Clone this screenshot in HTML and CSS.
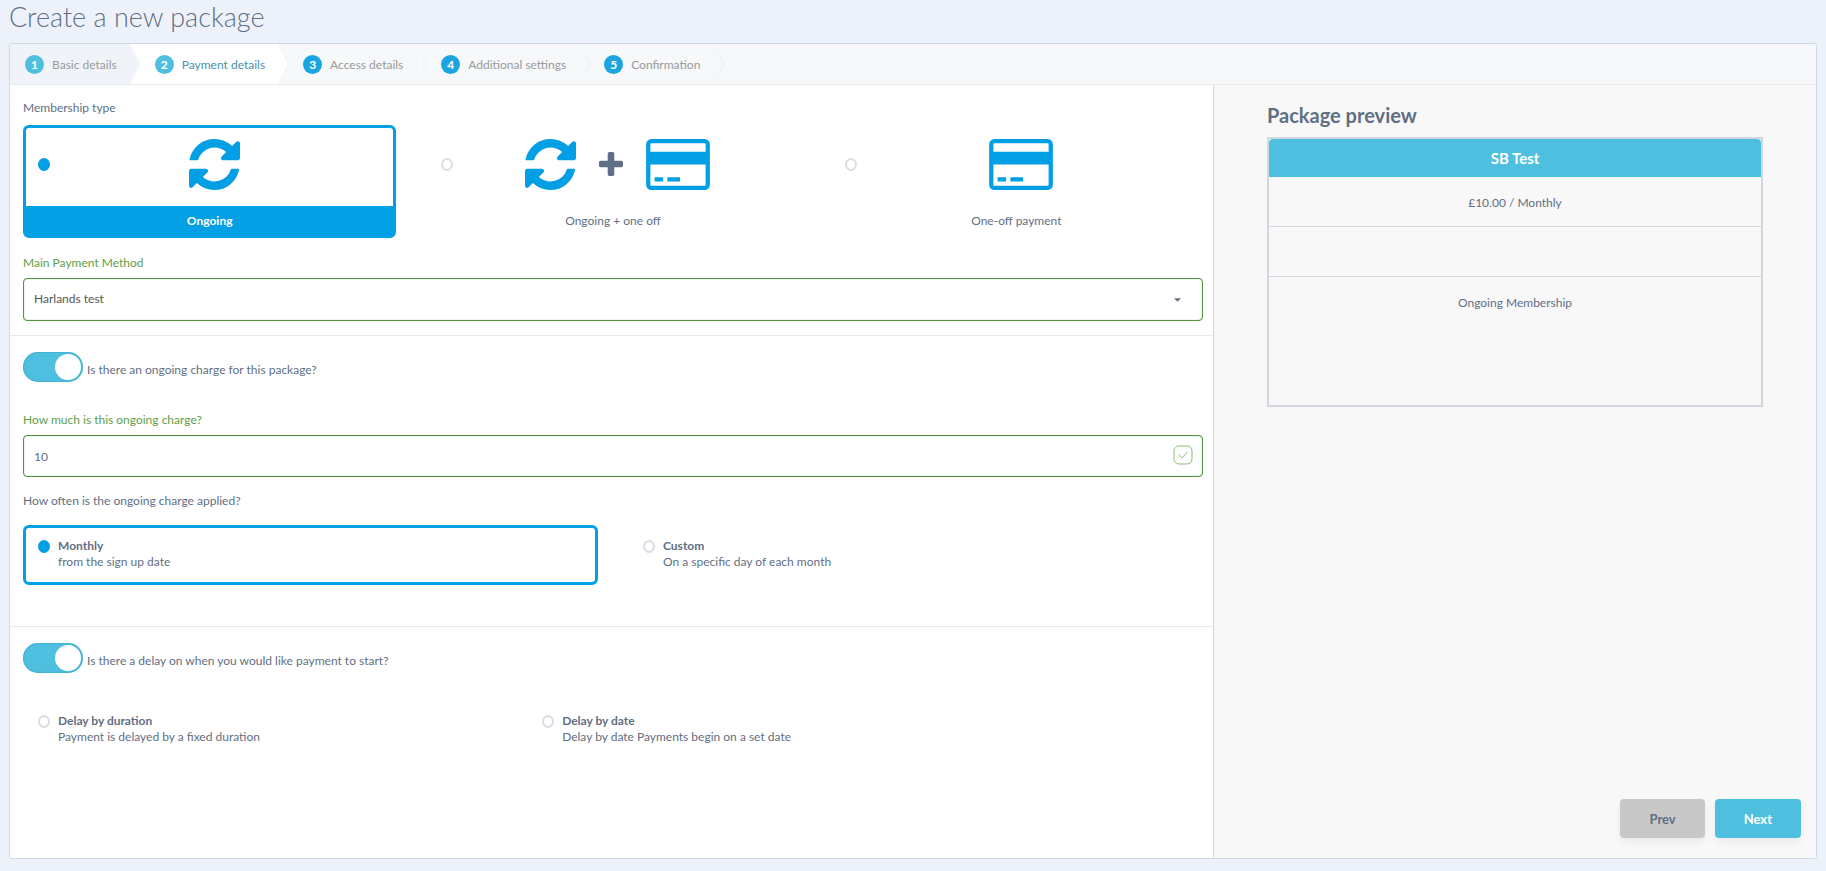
FILE: index.html
```html
<!DOCTYPE html>
<html lang="en">
<head>
<meta charset="utf-8">
<title>Create a new package</title>
<meta name="viewport" content="width=device-width, initial-scale=1">
<link rel="stylesheet" href="styles.css">
</head>
<body>
<svg class="sprite" aria-hidden="true">
  <symbol id="icon-sync" viewBox="0 0 1536 1536"><path d="M1511 928q0 5-1 7-64 268-268 434.5t-478 166.5q-146 0-282.5-55t-243.5-157l-129 129q-19 19-45 19t-45-19-19-45v-448q0-26 19-45t45-19h448q26 0 45 19t19 45-19 45l-137 137q71 66 161 102t187 36q134 0 250-65t186-179q11-17 53-117 8-23 30-23h192q13 0 22.5 9.5t9.5 22.5zm25-800v448q0 26-19 45t-45 19h-448q-26 0-45-19t-19-45 19-45l138-138q-148-137-349-137-134 0-250 65t-186 179q-11 17-53 117-8 23-30 23h-199q-13 0-22.5-9.5t-9.5-22.5v-7q65-268 270-434.5t480-166.5q146 0 284 55.5t245 156.5l130-129q19-19 45-19t45 19 19 45z"/></symbol>
  <symbol id="icon-card" viewBox="0 0 1920 1536"><path d="M1760 0q66 0 113 47t47 113v1216q0 66-47 113t-113 47h-1600q-66 0-113-47t-47-113v-1216q0-66 47-113t113-47h1600zM160 128q-13 0-22.5 9.5t-9.5 22.5v224h1664v-224q0-13-9.5-22.5t-22.5-9.5h-1600zM1760 1408q13 0 22.5-9.5t9.5-22.5v-608h-1664v608q0 13 9.5 22.5t22.5 9.5h1600zM256 1280v-128h256v128h-256zM640 1280v-128h384v128h-384z"/></symbol>
  <symbol id="icon-plus" viewBox="0 0 1408 1408"><path d="M1408 608v192q0 40-28 68t-68 28h-416v416q0 40-28 68t-68 28h-192q-40 0-68-28t-28-68v-416h-416q-40 0-68-28t-28-68v-192q0-40 28-68t68-28h416v-416q0-40 28-68t68-28h192q40 0 68 28t28 68v416h416q40 0 68 28t28 68z"/></symbol>
</svg>

<h1 class="page-title">Create a new package</h1>

<form class="wizard">
  <nav aria-label="Steps">
    <ol class="steps">
      <li class="step done"><a href="#basic"><span class="badge">1</span>Basic details</a></li>
      <li class="step active"><a href="#payment" aria-current="step"><span class="badge">2</span>Payment details</a></li>
      <li class="step"><a href="#access"><span class="badge">3</span>Access details</a></li>
      <li class="step"><a href="#settings"><span class="badge">4</span>Additional settings</a></li>
      <li class="step"><a href="#confirm"><span class="badge">5</span>Confirmation</a></li>
    </ol>
  </nav>

  <div class="body">
    <main class="details">
      <section class="section">
        <h2 class="label" id="type-label">Membership type</h2>
        <div class="types" role="radiogroup" aria-labelledby="type-label">
          <label class="type">
            <span class="type-top">
              <input class="radio" type="radio" name="type" checked>
              <span class="icons"><svg class="sync"><use href="#icon-sync"/></svg></span>
            </span>
            <span class="type-name">Ongoing</span>
          </label>
          <label class="type">
            <span class="type-top">
              <input class="radio" type="radio" name="type">
              <span class="icons"><svg class="sync"><use href="#icon-sync"/></svg><svg class="plus"><use href="#icon-plus"/></svg><svg class="card"><use href="#icon-card"/></svg></span>
            </span>
            <span class="type-name">Ongoing + one off</span>
          </label>
          <label class="type">
            <span class="type-top">
              <input class="radio" type="radio" name="type">
              <span class="icons"><svg class="card"><use href="#icon-card"/></svg></span>
            </span>
            <span class="type-name">One-off payment</span>
          </label>
        </div>
        <label class="label valid" for="method">Main Payment Method</label>
        <div class="control">
          <select class="field" id="method"><option>Harlands test</option></select>
          <svg class="caret" viewBox="0 0 8 4"><path d="M0 0h8L4 4z"/></svg>
        </div>
      </section>

      <section class="section">
        <label class="toggle"><input class="switch" type="checkbox" role="switch" checked><span class="toggle-text">Is there an ongoing charge for this package?</span></label>
        <label class="label valid" for="charge">How much is this ongoing charge?</label>
        <div class="control">
          <input class="field" id="charge" type="text" value="10">
          <svg class="tick" viewBox="0 0 20 20"><rect x="1" y="1" width="18" height="18" rx="5"/><path d="M5.500 9.500l3.500 3.500 5.500-6"/></svg>
        </div>
        <h2 class="label" id="often-label">How often is the ongoing charge applied?</h2>
        <div class="options halves" role="radiogroup" aria-labelledby="often-label">
          <label class="option">
            <input class="radio" type="radio" name="often" checked>
            <span class="option-text"><b>Monthly</b><span>from the sign up date</span></span>
          </label>
          <label class="option">
            <input class="radio" type="radio" name="often">
            <span class="option-text"><b>Custom</b><span>On a specific day of each month</span></span>
          </label>
        </div>
      </section>

      <section class="section">
        <label class="toggle"><input class="switch" type="checkbox" role="switch" checked><span class="toggle-text">Is there a delay on when you would like payment to start?</span></label>
        <div class="options twelfths" role="radiogroup" aria-label="Payment delay">
          <label class="option">
            <input class="radio" type="radio" name="delay">
            <span class="option-text"><b>Delay by duration</b><span>Payment is delayed by a fixed duration</span></span>
          </label>
          <label class="option">
            <input class="radio" type="radio" name="delay">
            <span class="option-text"><b>Delay by date</b><span>Delay by date Payments begin on a set date</span></span>
          </label>
        </div>
      </section>
    </main>

    <aside class="side">
      <div class="summary">
        <h2 class="summary-title">Package preview</h2>
        <div class="preview">
          <h3 class="preview-name">SB Test</h3>
          <p class="preview-row">£10.00 / Monthly</p>
          <p class="preview-row"></p>
          <p class="preview-row last">Ongoing Membership</p>
        </div>
      </div>
      <div class="actions">
        <button class="btn prev" type="button">Prev</button>
        <button class="btn next" type="button">Next</button>
      </div>
    </aside>
  </div>
</form>
</body>
</html>
```
FILE: styles.css
```css
:root {
  --ink: #5f6f84;
  --blue: #029fe5;
  --sky: #4fbfdf;
  --green: #5f9e48;
  --line: #d2d6de;
}

* {
  box-sizing: border-box;
}

body {
  margin: 0;
  padding: 0 9px 12px;
  min-height: 100vh;
  display: flex;
  flex-direction: column;
  background: #edf2fa;
  color: var(--ink);
  font: 12px/17px Lato, "Liberation Sans", sans-serif;
}

h1, h2, h3, p, ol {
  margin: 0;
  padding: 0;
  font-weight: 400;
}

.sprite {
  position: absolute;
  width: 0;
  height: 0;
}

.page-title {
  height: 43px;
  font-size: 27px;
  font-weight: 300;
  line-height: 34px;
}

.wizard {
  flex: 1;
  display: flex;
  flex-direction: column;
  border: 1px solid #ccd9e6;
  border-radius: 3px;
  background: #fff;
  overflow: hidden;
}

/* Step bar */
.steps {
  display: flex;
  height: 41px;
  list-style: none;
  background: #f6f8fa;
  border-bottom: 1px solid #e6ebf0;
}

.step {
  position: relative;
  display: flex;
  align-items: center;
  padding: 0 13px 0 25px;
  background: #f6f8fa;
}

.step:first-child {
  padding-left: 15px;
}

.step::before,
.step::after {
  content: "";
  position: absolute;
  z-index: 1;
  top: 0;
  left: 100%;
  width: 11px;
  height: 100%;
  background: #eaedf1;
  clip-path: polygon(0 0, 100% 50%, 0 100%);
}

.step::after {
  width: 10px;
  background: #f6f8fa;
}

.step.done,
.step.done::before,
.step.done::after {
  background: #f0f4f9;
}

.step.active,
.step.active::after {
  background: #fff;
}

.step a {
  display: flex;
  align-items: center;
  gap: 8px;
  color: #999;
  text-decoration: none;
}

.step.active a {
  color: #4a8fb0;
}

.badge {
  width: 19px;
  height: 19px;
  border-radius: 50%;
  background: #1ba5e0;
  color: #fff;
  font-weight: 700;
  line-height: 19px;
  text-align: center;
}

.done .badge,
.active .badge {
  background: var(--sky);
}

.step .badge {
  flex: none;
}

/* Columns */
.body {
  flex: 1;
  display: grid;
  grid-template-columns: 2fr 1fr;
}

.details {
  border-right: 1px solid #d6dbe5;
}

.section {
  padding: 16px 10px 0 13px;
}

.section + .section {
  border-top: 1px solid #e6eaef;
}

.section:first-child {
  padding-top: 14px;
  padding-bottom: 14px;
}

.label {
  display: block;
  font-size: 12px;
  line-height: 17px;
}

.valid {
  color: var(--green);
}

/* Membership type cards */
.types {
  display: grid;
  grid-template-columns: repeat(3, 1fr);
  gap: 30px;
  margin: 9px 0 16px;
}

.type {
  display: flex;
  flex-direction: column;
  border: 3px solid transparent;
  border-radius: 6px;
}

.type:has(:checked),
.option:has(:checked) {
  border-color: var(--blue);
}

.type-top {
  display: flex;
  align-items: center;
  height: 78px;
  padding: 0 15px 6px 12px;
}

.icons {
  flex: 1;
  display: flex;
  align-items: center;
  justify-content: center;
  gap: 23px;
  fill: var(--blue);
}

.sync {
  width: 51px;
  height: 51px;
}

.card {
  width: 64px;
  height: 51px;
}

.plus {
  width: 24px;
  height: 24px;
  fill: var(--ink);
}

.type-name {
  padding: 6px 0;
  text-align: center;
}

.type:has(:checked) .type-name {
  background: var(--blue);
  color: #fff;
  font-weight: 700;
}

.radio {
  appearance: none;
  flex: none;
  width: 12px;
  height: 13px;
  margin: 0;
  border: 2px solid #dadde5;
  border-radius: 50%;
  background: #fff;
}

.radio:checked {
  border-color: var(--blue);
  background: var(--blue);
}

/* Fields */
.control {
  display: grid;
  align-items: center;
  margin: 7px 0 15px;
}

.control > * {
  grid-area: 1 / 1;
}

.field {
  appearance: none;
  width: 100%;
  height: 42px;
  margin: 0;
  padding: 0 10px;
  border: 1px solid #55923f;
  border-radius: 4px;
  background: #fff;
  box-shadow: inset 0 0 1px var(--green);
  color: var(--ink);
  font: inherit;
}

select.field {
  height: 43px;
  padding-bottom: 2px;
  color: #555;
}

.section:first-child .control {
  margin-bottom: 0;
}

.caret {
  justify-self: end;
  width: 7px;
  height: 4px;
  margin-right: 22px;
  fill: var(--ink);
  pointer-events: none;
}

.tick {
  justify-self: end;
  width: 20px;
  height: 20px;
  margin: 0 10px 2px 0;
  fill: none;
  stroke: #8dbb7a;
}

/* Switches */
.toggle {
  display: flex;
  align-items: center;
  gap: 4px;
}

.toggle-text {
  padding-top: 4px;
}

.switch {
  appearance: none;
  width: 60px;
  height: 30px;
  margin: 0;
  padding: 2px;
  border-radius: 15px;
  background: var(--sky);
  box-shadow: inset 0 0 2px #2f8fae;
}

.switch::before {
  content: "";
  display: block;
  width: 26px;
  height: 26px;
  border-radius: 50%;
  background: #fff;
}

.switch:checked::before {
  margin-left: auto;
}

.toggle + .label {
  margin-top: 29px;
}

/* Radio options */
.options {
  display: grid;
  gap: 30px;
}

.halves {
  grid-template-columns: 1fr 1fr;
  margin: 16px 0 41px;
}

.twelfths {
  grid-template-columns: repeat(12, 1fr);
  margin: 27px 0;
}

.twelfths .option {
  grid-column: span 5;
}

.option {
  display: flex;
  align-items: flex-start;
  gap: 8px;
  height: 60px;
  padding: 10px 12px;
  border: 3px solid transparent;
  border-radius: 6px;
}

.option .radio {
  margin-top: 2px;
}

.option-text {
  display: flex;
  flex-direction: column;
  line-height: 16px;
}

/* Preview */
.side {
  display: flex;
  flex-direction: column;
  justify-content: space-between;
  background: #f8f8f8;
}

.summary {
  padding: 18px 53px 0;
}

.summary-title {
  font-size: 20px;
  font-weight: 700;
  line-height: 24px;
}

.preview {
  margin-top: 10px;
  border: 2px solid var(--line);
}

.preview-name {
  border-radius: 4px 4px 0 0;
  background: var(--sky);
  color: #fff;
  font-size: 15px;
  font-weight: 700;
  line-height: 38px;
  text-align: center;
}

.preview-row {
  height: 50px;
  padding-top: 17px;
  border-bottom: 1px solid var(--line);
  text-align: center;
}

.preview-row.last {
  height: 128px;
  border: 0;
}

.actions {
  display: flex;
  justify-content: flex-end;
  gap: 10px;
  padding: 0 15px 20px;
}

.btn {
  height: 39px;
  padding: 0 29px;
  border: 0;
  border-radius: 4px;
  box-shadow: 0 4px 8px rgb(0 0 0 / 6%);
  font: 700 13px/20px Lato, "Liberation Sans", sans-serif;
}

.prev {
  background: #c8c8c8;
  color: var(--ink);
}

.next {
  background: var(--sky);
  color: #fff;
}
```
